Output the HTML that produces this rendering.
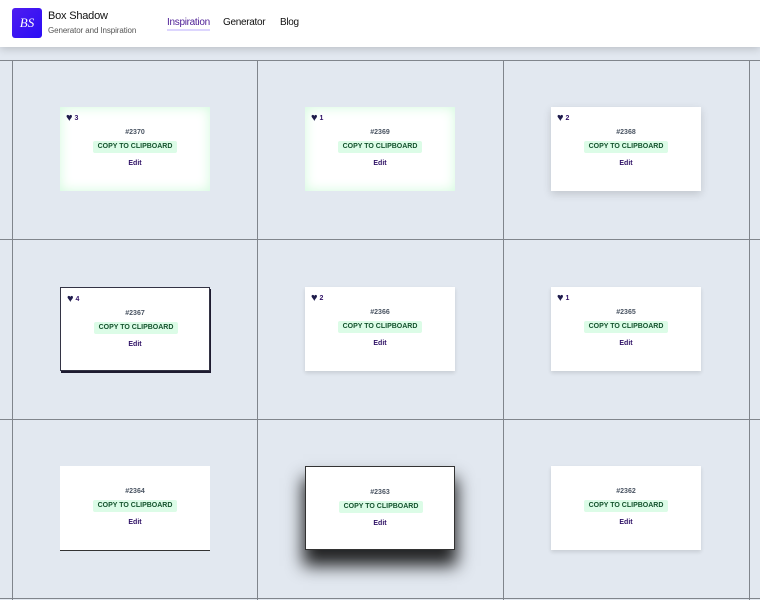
<!DOCTYPE html>
<html><head><style>
*{margin:0;padding:0;box-sizing:border-box}
body{width:760px;height:600px;overflow:hidden;background:#e2e8f0;font-family:"Liberation Sans",Arial,sans-serif;position:relative}
.hdr{position:absolute;left:0;top:0;width:760px;height:47px;background:#fff;box-shadow:0 2px 8px rgba(0,0,0,.18);z-index:5}
.logo{position:absolute;left:12px;top:8px;width:30px;height:30px;border-radius:3px;background:linear-gradient(135deg,#4f1df0,#2a0df5);color:#fff;font:italic 13px "Liberation Serif",serif;text-align:center;line-height:30px}
.t1{position:absolute;left:48px;top:10px;font-size:11px;letter-spacing:-0.2px;color:#111}
.t2{position:absolute;left:48px;top:26px;font-size:8px;letter-spacing:-0.1px;color:#555}
.nav{position:absolute;top:17px;font-size:10px;letter-spacing:-0.3px;color:#111}
.vl{position:absolute;top:60px;width:1px;height:540px;background:#80858c}
.hl{position:absolute;left:0;width:760px;height:1px;background:#80858c}
.c{position:absolute;width:150px;height:84px;background:#fff;text-align:center}
.h{position:absolute;left:6px;top:5px;font-size:7px;font-weight:bold;color:#2e1065}
.h span{font-size:11px;color:#1e1b4b;vertical-align:-1px}
.id{position:absolute;left:0;right:0;top:22px;font-size:7px;font-weight:bold;color:#4b5563}
.cp{position:absolute;left:33px;width:84px;top:34px;height:12px;background:#dcfce7;border-radius:2px;font-size:7px;font-weight:bold;color:#14532d;line-height:12px}
.ed{position:absolute;left:0;right:0;top:53px;font-size:7px;font-weight:bold;color:#2e1065}
</style></head><body>
<div class="hdr">
<div class="logo">BS</div>
<div class="t1">Box Shadow</div>
<div class="t2">Generator and Inspiration</div>
<div class="nav" style="left:167px;color:#4c1d95;border-bottom:2px solid #ddd6fe;padding-bottom:1px">Inspiration</div>
<div class="nav" style="left:223px">Generator</div>
<div class="nav" style="left:280px">Blog</div>
</div>
<div class="vl" style="left:12px"></div><div class="vl" style="left:257px"></div><div class="vl" style="left:503px"></div><div class="vl" style="left:749px"></div>
<div class="hl" style="top:60px"></div><div class="hl" style="top:239px"></div><div class="hl" style="top:419px"></div><div class="hl" style="top:598px"></div>

<div class="c" style="left:60px;top:107px;box-shadow:inset 0 0 12px #d1fadc"><div class="h"><span>♥</span> 3</div><div class="id">#2370</div><div class="cp">COPY TO CLIPBOARD</div><div class="ed">Edit</div></div>
<div class="c" style="left:305px;top:107px;box-shadow:inset 0 0 12px #d1fadc"><div class="h"><span>♥</span> 1</div><div class="id">#2369</div><div class="cp">COPY TO CLIPBOARD</div><div class="ed">Edit</div></div>
<div class="c" style="left:551px;top:107px;box-shadow:0 3px 8px rgba(0,0,0,.15)"><div class="h"><span>♥</span> 2</div><div class="id">#2368</div><div class="cp">COPY TO CLIPBOARD</div><div class="ed">Edit</div></div>

<div class="c" style="left:60px;top:287px;border:1px solid #334;box-shadow:1px 2px 0 #1e1b30"><div class="h"><span>♥</span> 4</div><div class="id">#2367</div><div class="cp">COPY TO CLIPBOARD</div><div class="ed">Edit</div></div>
<div class="c" style="left:305px;top:287px;box-shadow:0 2px 4px rgba(0,0,0,.12)"><div class="h"><span>♥</span> 2</div><div class="id">#2366</div><div class="cp">COPY TO CLIPBOARD</div><div class="ed">Edit</div></div>
<div class="c" style="left:551px;top:287px;box-shadow:0 2px 4px rgba(0,0,0,.12)"><div class="h"><span>♥</span> 1</div><div class="id">#2365</div><div class="cp">COPY TO CLIPBOARD</div><div class="ed">Edit</div></div>

<div class="c" style="left:60px;top:466px;box-shadow:0 1px 0 #333"><div class="id">#2364</div><div class="cp">COPY TO CLIPBOARD</div><div class="ed">Edit</div></div>
<div class="c" style="left:305px;top:466px;border:1px solid #333;box-shadow:0 14px 16px 2px rgba(0,0,0,.85)"><div class="id">#2363</div><div class="cp">COPY TO CLIPBOARD</div><div class="ed">Edit</div></div>
<div class="c" style="left:551px;top:466px;box-shadow:0 2px 4px rgba(0,0,0,.12)"><div class="id">#2362</div><div class="cp">COPY TO CLIPBOARD</div><div class="ed">Edit</div></div>
</body></html>
